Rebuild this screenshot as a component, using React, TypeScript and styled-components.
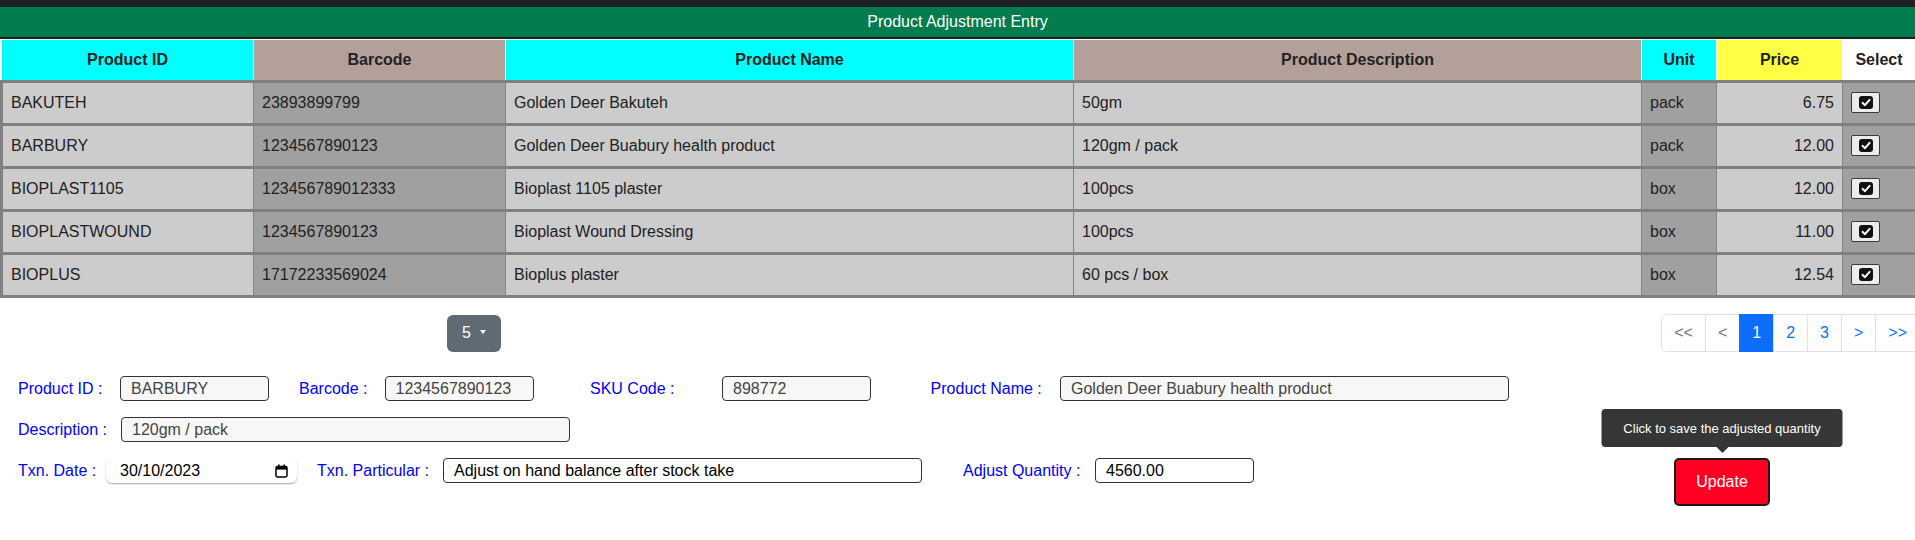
import React from "react";
import styled, { createGlobalStyle } from "styled-components";

const GlobalStyle = createGlobalStyle`
  html, body {
    margin: 0;
    padding: 0;
    background: #ffffff;
    overflow: hidden;
  }
  body {
    font-family: "Liberation Sans", Arial, Helvetica, sans-serif;
    color: #222222;
  }
  * { box-sizing: border-box; }
`;

const COLS = "253px 252px 568px 568px 75px 126px 73px";

const Page = styled.div`
  width: 1915px;
`;

const TopBar = styled.div`
  height: 7px;
  background: #1e2125;
`;

const TitleBand = styled.div`
  height: 32px;
  background: #007c4f;
  border-bottom: 2px solid #1e2125;
  color: #ffffff;
  font-size: 16px;
  display: flex;
  align-items: center;
  justify-content: center;
  padding-bottom: 1px;
`;

const Grid = styled.div`
  display: grid;
  grid-template-columns: ${COLS};
`;

const HeaderRow = styled(Grid)`
  height: 44px;
  border-top: 1px solid #ffffff;
  border-bottom: 3px solid #808080;
`;

const HeaderCell = styled.div<{ $bg: string }>`
  background: ${(p) => p.$bg};
  border-left: 1px solid #ffffff;
  display: flex;
  align-items: center;
  justify-content: center;
  font-weight: bold;
  font-size: 16px;
  color: #222222;
  &:first-child {
    border-left-width: 2px;
  }
`;

const BodyRow = styled(Grid)`
  height: 43px;
  border-bottom: 3px solid #808080;
`;

const Cell = styled.div<{ $dark?: boolean; $right?: boolean }>`
  background: ${(p) => (p.$dark ? "#a0a0a0" : "#cccccc")};
  border-left: 1px solid #858585;
  display: flex;
  align-items: center;
  justify-content: ${(p) => (p.$right ? "flex-end" : "flex-start")};
  padding: 0 8px;
  font-size: 16px;
  color: #222222;
  white-space: nowrap;
  overflow: hidden;
  &:first-child {
    border-left: 3px solid #808080;
  }
`;

const CheckFrame = styled.span`
  width: 29px;
  height: 21px;
  border: 1px solid #3a3a3a;
  background: #ececec;
  border-radius: 2px;
  display: flex;
  align-items: center;
  justify-content: center;
  margin-top: -2px;
`;

const CheckInner = styled.span`
  width: 14px;
  height: 13px;
  border-radius: 3px;
  background: #111111;
  display: flex;
  align-items: center;
  justify-content: center;
`;

const ControlsRow = styled.div`
  display: flex;
  align-items: center;
  margin-top: 16px;
  height: 38px;
  padding-left: 447px;
`;

const DropButton = styled.button`
  height: 37px;
  width: 54px;
  border: none;
  border-radius: 6px;
  background: #5f6b73;
  color: #ffffff;
  font-family: inherit;
  font-size: 16px;
  display: flex;
  align-items: center;
  justify-content: center;
  gap: 9px;
  padding: 0;
`;

const Caret = styled.span`
  width: 0;
  height: 0;
  border-left: 3.5px solid transparent;
  border-right: 3.5px solid transparent;
  border-top: 4px solid #ffffff;
  margin-top: -2px;
`;

const Pager = styled.ul`
  list-style: none;
  display: flex;
  margin: 0 -5px 0 auto;
  padding: 0;
`;

const PageItem = styled.li<{ $active?: boolean; $disabled?: boolean }>`
  height: 38px;
  padding: 0 12px;
  display: flex;
  align-items: center;
  justify-content: center;
  font-size: 16px;
  border: 1px solid ${(p) => (p.$active ? "#0d6efd" : "#dee2e6")};
  margin-left: -1px;
  background: ${(p) => (p.$active ? "#0d6efd" : "#ffffff")};
  color: ${(p) => (p.$active ? "#ffffff" : p.$disabled ? "#6c757d" : "#0d6efd")};
  &:first-child {
    margin-left: 0;
    border-radius: 6px 0 0 6px;
  }
`;

const Form = styled.div`
  display: flex;
  flex-direction: column;
  gap: 16px;
  margin-top: 24px;
  padding-left: 18px;
`;

const FormRow = styled.div`
  display: flex;
  align-items: flex-start;
`;

const Field = styled.div<{ $after?: number }>`
  display: flex;
  align-items: flex-start;
  margin-right: ${(p) => p.$after ?? 0}px;
`;

const Label = styled.label<{ $w: number }>`
  width: ${(p) => p.$w}px;
  flex: none;
  line-height: 25px;
  height: 25px;
  font-size: 16px;
  color: #0000ff;
  white-space: nowrap;
`;

const TextInput = styled.input<{ $w: number; $ro?: boolean }>`
  width: ${(p) => p.$w}px;
  height: 25px;
  flex: none;
  border: 1px solid #333333;
  border-radius: 4px;
  background: ${(p) => (p.$ro ? "#f7f7f7" : "#ffffff")};
  color: ${(p) => (p.$ro ? "#444444" : "#000000")};
  font-family: inherit;
  font-size: 16px;
  padding: 0 10px;
  outline: none;
`;

const DateField = styled.div`
  width: 191px;
  height: 25px;
  flex: none;
  border-radius: 6px;
  background: #ffffff;
  box-shadow: 0 1px 1.5px rgba(0, 0, 0, 0.35);
  display: flex;
  align-items: center;
  justify-content: space-between;
  padding: 0 9px 0 14px;
  font-size: 16px;
  color: #000000;
`;

const ButtonWrap = styled.div`
  position: relative;
  margin-left: 420px;
`;

const UpdateButton = styled.button`
  width: 96px;
  height: 48px;
  background: #ff0022;
  border: 2px solid #1a1a1a;
  border-radius: 5px;
  color: #ffffff;
  font-family: inherit;
  font-size: 16px;
  padding: 0;
`;

const Tooltip = styled.div`
  position: absolute;
  bottom: calc(100% + 11px);
  left: 50%;
  transform: translateX(-50%);
  width: 241px;
  height: 38px;
  background: #363636;
  border-radius: 4px;
  color: #ffffff;
  font-size: 13px;
  display: flex;
  align-items: center;
  justify-content: center;
  white-space: nowrap;
  &::after {
    content: "";
    position: absolute;
    top: 100%;
    left: 50%;
    margin-left: -6px;
    border-left: 6px solid transparent;
    border-right: 6px solid transparent;
    border-top: 6px solid #363636;
  }
`;

type Row = { id: string; barcode: string; name: string; desc: string; unit: string; price: string };

const rows: Row[] = [
  { id: "BAKUTEH", barcode: "23893899799", name: "Golden Deer Bakuteh", desc: "50gm", unit: "pack", price: "6.75" },
  { id: "BARBURY", barcode: "1234567890123", name: "Golden Deer Buabury health product", desc: "120gm / pack", unit: "pack", price: "12.00" },
  { id: "BIOPLAST1105", barcode: "123456789012333", name: "Bioplast 1105 plaster", desc: "100pcs", unit: "box", price: "12.00" },
  { id: "BIOPLASTWOUND", barcode: "1234567890123", name: "Bioplast Wound Dressing", desc: "100pcs", unit: "box", price: "11.00" },
  { id: "BIOPLUS", barcode: "17172233569024", name: "Bioplus plaster", desc: "60 pcs / box", unit: "box", price: "12.54" },
];

const headers: { label: string; bg: string }[] = [
  { label: "Product ID", bg: "#00ffff" },
  { label: "Barcode", bg: "#b4a09a" },
  { label: "Product Name", bg: "#00ffff" },
  { label: "Product Description", bg: "#b4a09a" },
  { label: "Unit", bg: "#00ffff" },
  { label: "Price", bg: "#ffff44" },
  { label: "Select", bg: "#ffffff" },
];

const CheckMark = () => (
  <svg width="10" height="9" viewBox="0 0 10 9">
    <path d="M1.5 4.8 L4 7.2 L8.6 1.8" fill="none" stroke="#ffffff" strokeWidth="1.9" strokeLinecap="round" strokeLinejoin="round" />
  </svg>
);

const CalendarIcon = () => (
  <svg width="13" height="14" viewBox="0 0 13 14">
    <rect x="1" y="2.6" width="11" height="10.4" rx="1.4" fill="none" stroke="#000" strokeWidth="1.5" />
    <rect x="1" y="2.6" width="11" height="3" fill="#000" />
    <rect x="3" y="0.5" width="1.6" height="3" fill="#000" />
    <rect x="8.4" y="0.5" width="1.6" height="3" fill="#000" />
  </svg>
);

export default function App() {
  return (
    <Page>
      <GlobalStyle />
      <TopBar />
      <TitleBand>Product Adjustment Entry</TitleBand>
      <HeaderRow>
        {headers.map((h) => (
          <HeaderCell key={h.label} $bg={h.bg}>
            {h.label}
          </HeaderCell>
        ))}
      </HeaderRow>
      {rows.map((r) => (
        <BodyRow key={r.id}>
          <Cell>{r.id}</Cell>
          <Cell $dark>{r.barcode}</Cell>
          <Cell>{r.name}</Cell>
          <Cell>{r.desc}</Cell>
          <Cell $dark>{r.unit}</Cell>
          <Cell $right>{r.price}</Cell>
          <Cell $dark>
            <CheckFrame>
              <CheckInner>
                <CheckMark />
              </CheckInner>
            </CheckFrame>
          </Cell>
        </BodyRow>
      ))}

      <ControlsRow>
        <DropButton>
          5 <Caret />
        </DropButton>
        <Pager>
          <PageItem $disabled>&lt;&lt;</PageItem>
          <PageItem $disabled>&lt;</PageItem>
          <PageItem $active>1</PageItem>
          <PageItem>2</PageItem>
          <PageItem>3</PageItem>
          <PageItem>&gt;</PageItem>
          <PageItem>&gt;&gt;</PageItem>
        </Pager>
      </ControlsRow>

      <Form>
        <FormRow>
          <Field $after={30}>
            <Label $w={102}>Product ID :</Label>
            <TextInput $w={149} $ro readOnly value="BARBURY" />
          </Field>
          <Field $after={56.5}>
            <Label $w={85.5}>Barcode :</Label>
            <TextInput $w={149} $ro readOnly value="1234567890123" />
          </Field>
          <Field $after={59.6}>
            <Label $w={132}>SKU Code :</Label>
            <TextInput $w={149} $ro readOnly value="898772" />
          </Field>
          <Field>
            <Label $w={129.4}>Product Name :</Label>
            <TextInput $w={449} $ro readOnly value="Golden Deer Buabury health product" />
          </Field>
        </FormRow>
        <FormRow>
          <Field>
            <Label $w={103}>Description :</Label>
            <TextInput $w={449} $ro readOnly value="120gm / pack" />
          </Field>
        </FormRow>
        <FormRow>
          <Field $after={20}>
            <Label $w={88}>Txn. Date :</Label>
            <DateField>
              <span>30/10/2023</span>
              <CalendarIcon />
            </DateField>
          </Field>
          <Field $after={41}>
            <Label $w={126}>Txn. Particular :</Label>
            <TextInput $w={479} readOnly value="Adjust on hand balance after stock take" />
          </Field>
          <Field>
            <Label $w={132}>Adjust Quantity :</Label>
            <TextInput $w={159} readOnly value="4560.00" />
          </Field>
          <ButtonWrap>
            <Tooltip>Click to save the adjusted quantity</Tooltip>
            <UpdateButton>Update</UpdateButton>
          </ButtonWrap>
        </FormRow>
      </Form>
    </Page>
  );
}
